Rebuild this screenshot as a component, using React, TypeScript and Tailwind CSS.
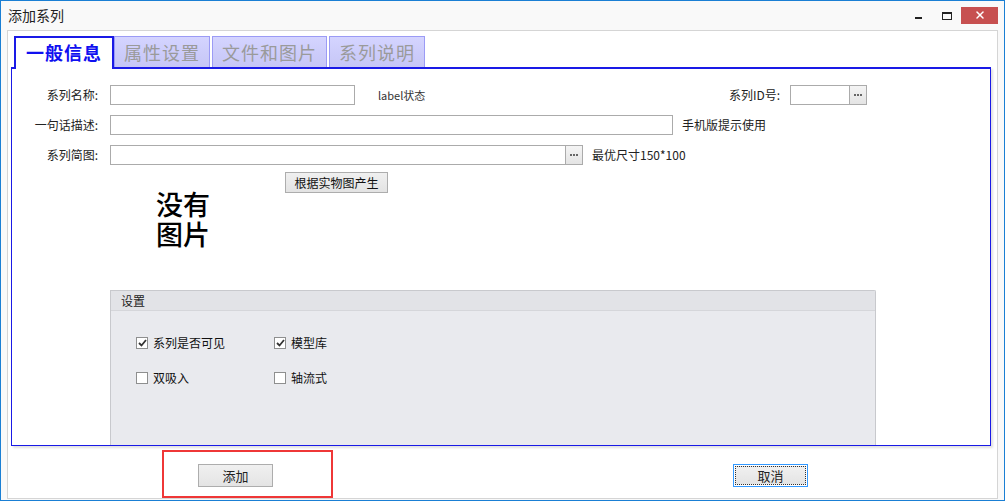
import { X } from "lucide-react"

const font = { fontFamily: '"Noto Sans CJK SC", "Noto Sans", sans-serif' }

function Field({ w, dots }: { w: number; dots?: boolean }) {
  return (
    <div className="flex h-[20px] border border-[#ababab] bg-white" style={{ width: w }}>
      <div className="flex-1" />
      {dots && (
        <div className="w-[17px] h-full border-l border-[#ababab] bg-gradient-to-b from-[#f4f4f4] to-[#e4e4e4] flex items-center justify-center gap-[1px]">
          <div className="w-[2px] h-[2px] bg-[#666]" />
          <div className="w-[2px] h-[2px] bg-[#666]" />
          <div className="w-[2px] h-[2px] bg-[#666]" />
        </div>
      )}
    </div>
  )
}

function Check({ checked, label }: { checked?: boolean; label: string }) {
  return (
    <div className="flex items-center gap-[5px]">
      <div className="w-[12px] h-[12px] border border-[#8e8f8f] bg-white flex items-center justify-center">
        {checked && (
          <svg width="9" height="8" viewBox="0 0 9 8">
            <path d="M1 4 L3.5 6.5 L8 1" stroke="#333" strokeWidth="1.8" fill="none" />
          </svg>
        )}
      </div>
      <span className="text-[12px] text-[#111]">{label}</span>
    </div>
  )
}

export default function App() {
  const tabs = ["属性设置", "文件和图片", "系列说明"]

  return (
    <div
      className="w-[1005px] h-[501px] border border-[#1a7fd4] bg-[#f9f9f9] flex flex-col text-[#222] overflow-hidden"
      style={font}
    >
      {/* title bar */}
      <div className="h-[29px] flex items-center shrink-0">
        <span className="pl-[7px] text-[14px] text-[#222]">添加系列</span>
        <div className="ml-auto flex items-center h-full">
          <div className="w-[30px] flex justify-center pt-[4px]">
            <div className="w-[7px] h-[2px] bg-[#222]" />
          </div>
          <div className="w-[28px] flex justify-center">
            <div className="w-[10px] h-[8px] border border-[#222] border-t-2" />
          </div>
          <div className="w-[37px] h-[17px] mr-[6px] bg-[#c75050] flex items-center justify-center mb-[1px]">
            <X size={12} strokeWidth={3} color="#fff" />
          </div>
        </div>
      </div>

      {/* body */}
      <div className="flex-1 mx-[6px] mb-[7px] border border-[#d5d5d5] bg-white flex flex-col">
        {/* tab strip */}
        <div className="flex items-end pl-[6px] pt-[3px] h-[36px] shrink-0">
          <div className="h-[33px] w-[100px] border-2 border-b-0 border-[#1a1ae6] bg-white flex items-center justify-center relative z-10 mb-[-2px] pb-[2px]">
            <span className="text-[18px] font-bold text-[#1010f0] tracking-[1px]">一般信息</span>
          </div>
          {tabs.map((t) => (
            <div
              key={t}
              className="h-[31px] mr-[2px] px-[9px] border border-b-0 border-[#9b9bf5] bg-gradient-to-b from-[#d4d4ff] to-[#c6c6f6] flex items-center"
            >
              <span className="text-[18px] text-[#9a9a9a] tracking-[1px]">{t}</span>
            </div>
          ))}
        </div>

        {/* tab content */}
        <div className="ml-[3px] mr-[6px] h-[379px] border border-[#1a1ae6] border-t-2 bg-white shadow-[2px_2px_2px_rgba(0,0,0,0.12)] flex flex-col">
          <div className="flex flex-col gap-[10px] pt-[16px] text-[12px]">
            <div className="flex items-center h-[20px]">
              <span className="w-[86px] text-right">系列名称:</span>
              <div className="w-[12px]" />
              <Field w={245} />
              <span className="ml-[23px] text-[11px] text-[#333]">label状态</span>
              <span className="ml-auto">系列ID号:</span>
              <div className="w-[10px]" />
              <Field w={77} dots />
              <div className="w-[123px]" />
            </div>
            <div className="flex items-center h-[20px]">
              <span className="w-[86px] text-right">一句话描述:</span>
              <div className="w-[12px]" />
              <Field w={563} />
              <span className="ml-[9px]">手机版提示使用</span>
            </div>
            <div className="flex items-center h-[20px]">
              <span className="w-[86px] text-right">系列简图:</span>
              <div className="w-[12px]" />
              <Field w={473} dots />
              <span className="ml-[9px]">最优尺寸150*100</span>
            </div>
          </div>

          <div className="flex pl-[273px] pt-[7px]">
            <div className="w-[103px] h-[21px] border border-[#adadad] bg-gradient-to-b from-[#f0f0f0] to-[#e3e3e3] flex items-center justify-center text-[12px] text-[#111]">
              根据实物图产生
            </div>
          </div>

          <div className="pl-[144px] mt-[-4px] text-[27px] leading-[30px] font-medium text-black w-[220px]">
            没有
            <br />
            图片
          </div>

          {/* settings group */}
          <div className="mt-auto ml-[98px] w-[766px] h-[155px] border border-b-0 border-[#c8c9cd] bg-[#e9eaee] rounded-tr-[2px] flex flex-col">
            <div className="h-[20px] bg-[#e2e3e7] border-b border-[#d5d6da] flex items-center pl-[10px] text-[12px]">
              设置
            </div>
            <div className="grid grid-cols-[138px_140px] gap-y-[17px] pl-[25px] pt-[23px]">
              <Check checked label="系列是否可见" />
              <Check checked label="模型库" />
              <Check label="双吸入" />
              <Check label="轴流式" />
            </div>
          </div>
        </div>

        {/* buttons */}
        <div className="flex-1 flex items-start">
          <div className="ml-[154px] mt-[4px] w-[171px] h-[48px] border-[2px] border-[#ef3737] flex items-start pl-[34px] pt-[12px]">
            <div className="w-[75px] h-[23px] border border-[#adadad] bg-gradient-to-b from-[#f0f0f0] to-[#e4e4e4] flex items-center justify-center text-[13px] text-[#222]">
              添加
            </div>
          </div>
          <div className="ml-[400px] mt-[18px] w-[75px] h-[23px] border border-[#3399ff] p-[1px]">
            <div className="w-full h-full border border-dotted border-[#333] bg-gradient-to-b from-[#f0f0f0] to-[#e4e4e4] flex items-center justify-center text-[13px] text-[#222]">
              取消
            </div>
          </div>
        </div>
      </div>
    </div>
  )
}
